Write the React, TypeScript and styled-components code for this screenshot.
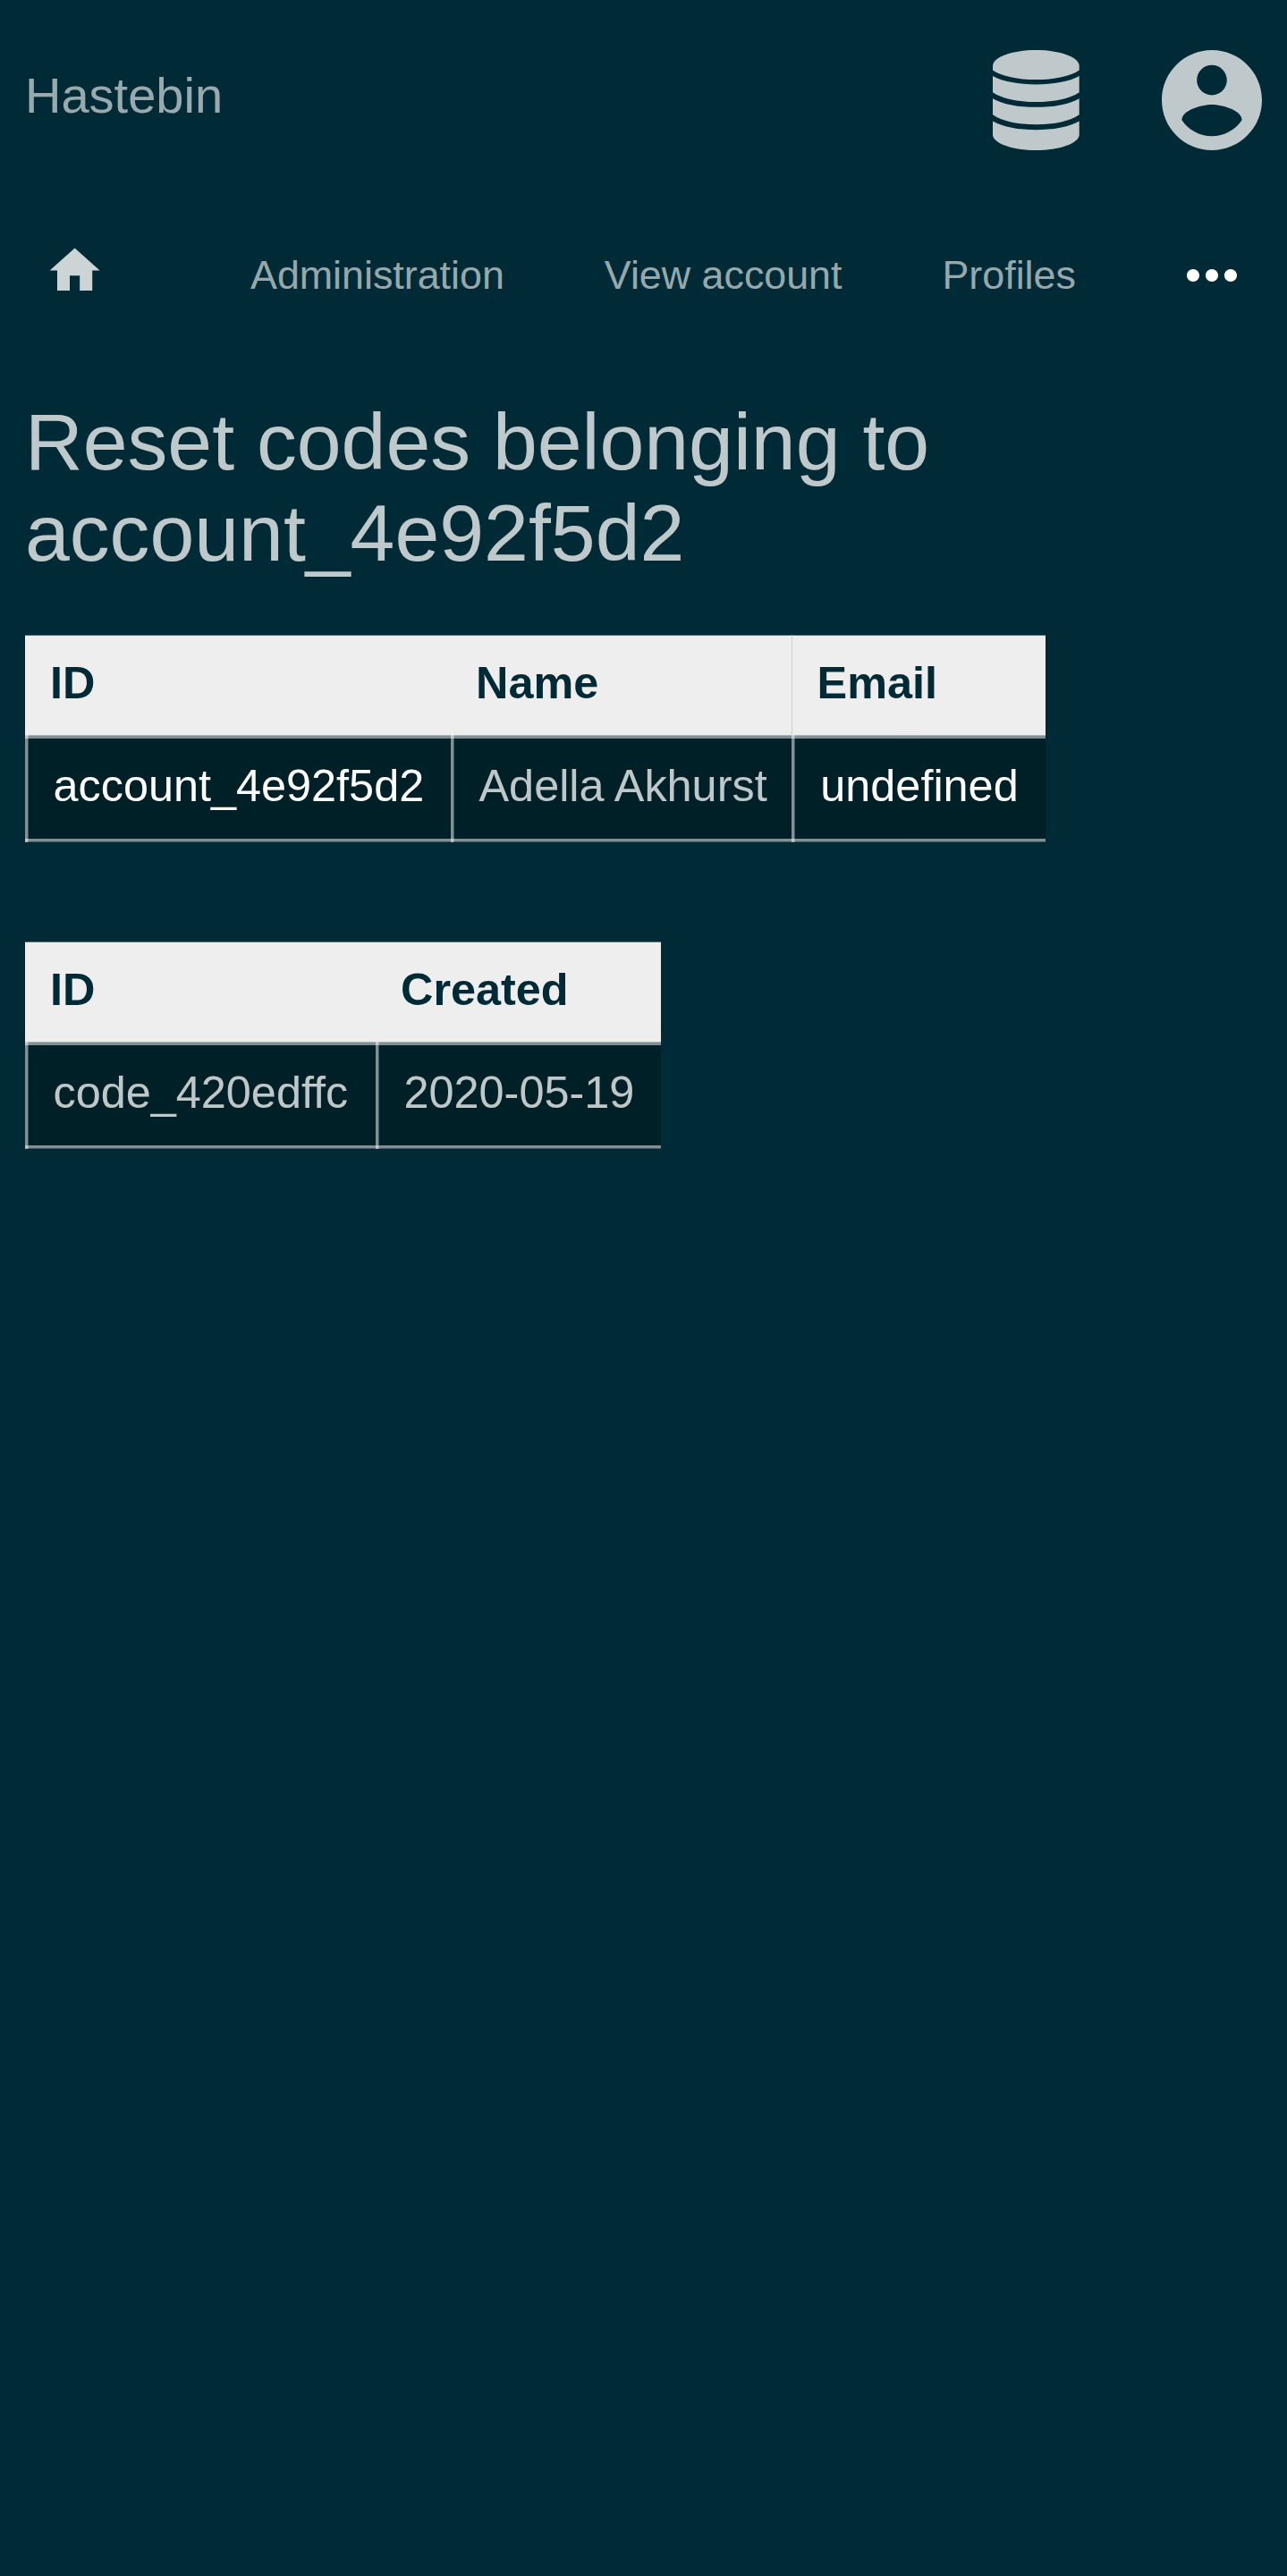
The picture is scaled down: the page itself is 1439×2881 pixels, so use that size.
import React from 'react';
import styled, { createGlobalStyle } from 'styled-components';

const GlobalStyle = createGlobalStyle`
  *, *::before, *::after { box-sizing: border-box; }
  html, body {
    margin: 0;
    background: #002b36;
    color: #fff;
    font-family: "Liberation Sans", Arial, sans-serif;
  }
`;

const Page = styled.div`
  min-height: 2881px;
  background: #002b36;
`;

const Header = styled.header`
  display: flex;
  align-items: flex-start;
  height: 224px;
  padding: 56px 28.3px 0 28px;
`;

const Brand = styled.a`
  margin: 20px auto 0 0;
  font-size: 56px;
  line-height: 62px;
  color: rgba(255, 255, 255, 0.6);
`;

const HeaderIcon = styled.svg<{ $width: number }>`
  display: block;
  flex: none;
  width: ${(p) => p.$width}px;
  height: 112px;
  fill: rgba(255, 255, 255, 0.75);

  & + & {
    margin-left: 92px;
  }
`;

const Nav = styled.nav`
  display: flex;
  align-items: center;
  height: 168px;
  padding: 0 28px;
`;

const HomeLink = styled.a`
  display: flex;
  justify-content: center;
  width: 112px;
  margin-right: 84px;
`;

const HomeIcon = styled.svg`
  display: block;
  width: 67.2px;
  height: 67.2px;
  margin-bottom: 11px;
  fill: rgba(255, 255, 255, 0.8);
`;

const NavLink = styled.a`
  padding: 0 56px 3px;
  font-size: 44.8px;
  line-height: 56px;
  white-space: nowrap;
  color: rgba(255, 255, 255, 0.6);
`;

const MoreButton = styled.button`
  display: flex;
  margin: 0 14.3px 0 auto;
  padding: 0;
  border: 0;
  background: none;
`;

const MoreIcon = styled.svg`
  display: block;
  width: 84px;
  height: 84px;
  fill: #fff;
`;

const Main = styled.main`
  padding: 51px 28px 0;
`;

const Title = styled.h1`
  margin: 0 0 63px;
  font-size: 89.6px;
  font-weight: 400;
  line-height: 102px;
  color: rgba(255, 255, 255, 0.75);
`;

const Table = styled.table<{ $width: number }>`
  width: ${(p) => p.$width}px;
  margin-bottom: 111px;
  table-layout: fixed;
  border-collapse: separate;
  border-spacing: 0;
  font-size: 50.4px;
  line-height: 56px;
  white-space: nowrap;
`;

const HeadCell = styled.th<{ $width: number; $divided?: boolean }>`
  width: ${(p) => p.$width}px;
  height: 112px;
  padding: 25px 0 30px ${(p) => (p.$divided ? 27.6 : 28)}px;
  border-top: 1px solid #56747b;
  border-left: ${(p) => (p.$divided ? '1px solid #cfd1d2' : '0')};
  background: #eee;
  background-clip: padding-box;
  color: #002b36;
  font-weight: 700;
  text-align: left;
`;

const solid = 'rgba(255, 255, 255, 0.5)';
const soft = 'rgba(255, 255, 255, 0.25)';
const strong = 'rgba(255, 255, 255, 0.66)';

const Cell = styled.td<{ $link?: boolean; $divided?: boolean }>`
  height: 120px;
  padding: 29px 0 35px ${(p) => (p.$divided ? 32.3 : 31.5)}px;
  background:
    linear-gradient(to right, ${solid} 3px, ${soft} 3px) 0 0 / 4px 100% no-repeat,
    linear-gradient(to bottom, ${strong} 1px, ${solid} 1px) 0 0 / 100% 4px no-repeat,
    linear-gradient(to bottom, ${solid} 3px, ${soft} 3px) 0 100% / 100% 4px no-repeat,
    #002028;
  color: ${(p) => (p.$link ? '#fff' : 'rgba(255, 255, 255, 0.75)')};
`;

interface Column {
  label: string;
  width: number;
  value: string;
  link?: boolean;
  divided?: boolean;
}

const accountColumns: Column[] = [
  { label: 'ID', width: 476, value: 'account_4e92f5d2', link: true },
  { label: 'Name', width: 381, value: 'Adella Akhurst' },
  { label: 'Email', width: 284, value: 'undefined', link: true, divided: true },
];

const codeColumns: Column[] = [
  { label: 'ID', width: 392, value: 'code_420edffc' },
  { label: 'Created', width: 318.6, value: '2020-05-19' },
];

function DataTable({ columns }: { columns: Column[] }) {
  return (
    <Table $width={columns.reduce((sum, c) => sum + c.width, 0)}>
      <thead>
        <tr>
          {columns.map((c) => (
            <HeadCell key={c.label} $width={c.width} $divided={c.divided}>
              {c.label}
            </HeadCell>
          ))}
        </tr>
      </thead>
      <tbody>
        <tr>
          {columns.map((c) => (
            <Cell key={c.label} $link={c.link} $divided={c.divided}>
              {c.value}
            </Cell>
          ))}
        </tr>
      </tbody>
    </Table>
  );
}

export default function App() {
  return (
    <Page>
      <GlobalStyle />
      <Header>
        <Brand>Hastebin</Brand>
        <HeaderIcon $width={96.7} viewBox="0 0 291 335" preserveAspectRatio="none">
          <path d="M0 53C0 24 65 0 145.500 0S291 24 291 53V67C262 87 207 99 145.500 99S29 87 0 67Z" />
          <path d="M0 87C34 106 88 115 145.500 115S257 106 291 87V141C262 161 207 173.500 145.500 173.500S29 161 0 141Z" />
          <path d="M0 162C34 182 88 191 145.500 191S257 182 291 162V216C262 237 207 249 145.500 249S29 237 0 216Z" />
          <path d="M0 238C34 258 88 267 145.500 267S257 258 291 238V285C287 313 225 335 145.500 335S4 313 0 285Z" />
        </HeaderIcon>
        <HeaderIcon $width={112} viewBox="2 2 20 20">
          <path d="M12 2C6.480 2 2 6.480 2 12s4.480 10 10 10 10-4.480 10-10S17.520 2 12 2zm0 3c1.660 0 3 1.340 3 3s-1.340 3-3 3-3-1.340-3-3 1.340-3 3-3zm0 14.200c-2.500 0-4.710-1.280-6-3.220.030-1.990 4-3.080 6-3.080 1.990 0 5.970 1.090 6 3.080-1.290 1.940-3.500 3.220-6 3.220z" />
        </HeaderIcon>
      </Header>
      <Nav>
        <HomeLink>
          <HomeIcon viewBox="0 0 24 24">
            <path d="M10 20v-6h4v6h5v-8h3L12 3 2 12h3v8z" />
          </HomeIcon>
        </HomeLink>
        <NavLink>Administration</NavLink>
        <NavLink>View account</NavLink>
        <NavLink>Profiles</NavLink>
        <MoreButton aria-label="More">
          <MoreIcon viewBox="0 0 24 24">
            <path d="M6 10c-1.100 0-2 .9-2 2s.9 2 2 2 2-.9 2-2-.9-2-2-2zm12 0c-1.100 0-2 .9-2 2s.9 2 2 2 2-.9 2-2-.9-2-2-2zm-6 0c-1.100 0-2 .9-2 2s.9 2 2 2 2-.9 2-2-.9-2-2-2z" />
          </MoreIcon>
        </MoreButton>
      </Nav>
      <Main>
        <Title>
          Reset codes belonging to
          <br />
          account_4e92f5d2
        </Title>
        <DataTable columns={accountColumns} />
        <DataTable columns={codeColumns} />
      </Main>
    </Page>
  );
}
